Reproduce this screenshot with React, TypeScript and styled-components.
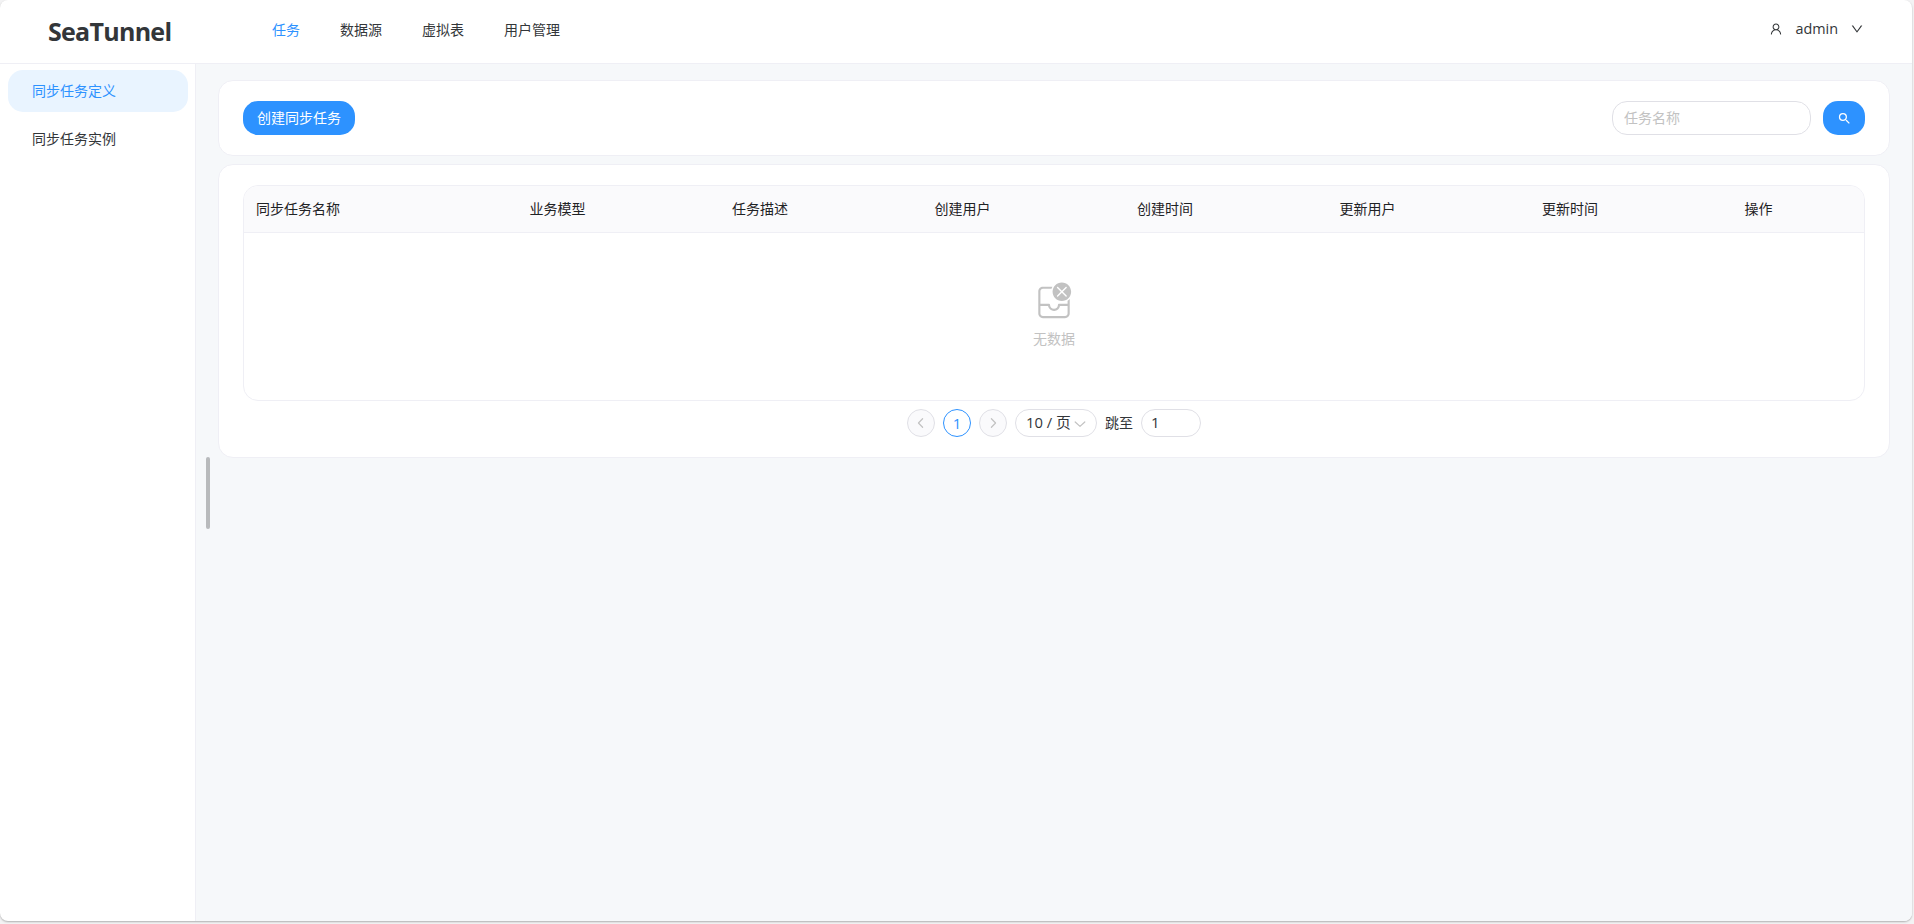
import React from 'react';
import styled, { createGlobalStyle } from 'styled-components';
import { AiOutlineUser, AiOutlineDown } from 'react-icons/ai';
import { MdSearch } from 'react-icons/md';

const GlobalStyle = createGlobalStyle`
  *, *::before, *::after { box-sizing: border-box; }
  body {
    margin: 0;
    background: #f3f3f4;
    color: #333639;
    font: 14px/22px 'Open Sans', 'Noto Sans CJK SC', sans-serif;
  }
  button, input { font: inherit; }
`;

const Page = styled.div`
  height: 924px;
  overflow: hidden;
`;

const Shell = styled.div`
  display: flex;
  flex-direction: column;
  width: 1912px;
  height: 921px;
  overflow: hidden;
  border-radius: 8px;
  background: #fff;
  box-shadow: 0 1px 2px rgba(0, 0, 0, 0.28);
`;

const Header = styled.header`
  display: flex;
  align-items: center;
  height: 64px;
  padding: 0 48px;
  border-bottom: 1px solid #efeff5;
`;

const Logo = styled.h1`
  width: 224px;
  margin: 0;
  padding-bottom: 2px;
  font-size: 25px;
  line-height: 60px;
  font-weight: 700;
  letter-spacing: -0.72px;
  white-space: nowrap;
`;

const Nav = styled.nav`
  display: flex;
  gap: 40px;
  padding-bottom: 4px;
`;

const NavItem = styled.a<{ $active?: boolean }>`
  color: ${({ $active }) => ($active ? '#2d92ff' : '#333639')};
`;

const User = styled.div`
  display: flex;
  align-items: center;
  margin-left: auto;
  padding-bottom: 6px;
`;

const UserName = styled.span`
  margin: 0 12px;
  font-size: 14.4px;
`;

const Body = styled.div`
  display: flex;
  flex: 1;
  min-height: 0;
`;

const Sider = styled.aside`
  display: flex;
  flex-direction: column;
  gap: 6px;
  width: 196px;
  padding: 6px 7px 0 8px;
  border-right: 1px solid #efeff5;
`;

const MenuItem = styled.a<{ $active?: boolean }>`
  display: flex;
  align-items: center;
  height: 42px;
  padding-left: 24px;
  border-radius: 15px;
  color: ${({ $active }) => ($active ? '#2d92ff' : '#333639')};
  background: ${({ $active }) => ($active ? '#e9f4ff' : 'transparent')};
`;

const Content = styled.main`
  display: flex;
  flex: 1;
  background: #f6f8fa;
`;

const ScrollThumb = styled.div`
  width: 4px;
  height: 72px;
  margin: 393px 8px 0 10px;
  border-radius: 2px;
  background: #b8babc;
`;

const Stack = styled.div`
  display: flex;
  flex-direction: column;
  gap: 8px;
  width: 1672px;
  padding-top: 16px;
`;

const Card = styled.section`
  padding: 20px 24px;
  border: 1px solid #efeff5;
  border-radius: 15px;
  background: #fff;
`;

const Toolbar = styled(Card)`
  display: flex;
  justify-content: space-between;
`;

const Search = styled.div`
  display: flex;
  gap: 12px;
`;

const Button = styled.button<{ $width: number }>`
  display: flex;
  align-items: center;
  justify-content: center;
  width: ${({ $width }) => $width}px;
  height: 34px;
  padding: 0;
  border: 0;
  border-radius: 15px;
  color: #fff;
  background: #2d92ff;
`;

const TextInput = styled.input<{ $width: number; $height: number }>`
  width: ${({ $width }) => $width}px;
  height: ${({ $height }) => $height}px;
  padding: 0 11px 2px;
  border: 1px solid #e0e0e6;
  border-radius: 15px;
  outline: none;
  color: #333639;
  background: #fff;
  &::placeholder { color: #c2c2c2; }
`;

const JumpInput = styled(TextInput)`
  padding-left: 9px;
  font-size: 15px;
`;

const TableFrame = styled.div`
  height: 216px;
  overflow: hidden;
  border: 1px solid #efeff5;
  border-radius: 15px;
`;

const HeadRow = styled.div`
  display: grid;
  grid-template-columns: 273.5px repeat(6, 202.5px) 1fr;
  height: 47px;
  border-bottom: 1px solid #efeff5;
  background: #fafafc;
`;

const HeadCell = styled.div`
  padding: 12px;
  color: #1f2225;
`;

const Empty = styled.div`
  display: flex;
  flex-direction: column;
  align-items: center;
  gap: 7px;
  padding-top: 48px;
  color: #c2c2c2;
`;

const Pagination = styled.div`
  display: flex;
  align-items: center;
  justify-content: center;
  gap: 8px;
  margin-top: 8px;
`;

const PageButton = styled.button<{ $active?: boolean }>`
  display: flex;
  align-items: center;
  justify-content: center;
  width: 28px;
  height: 28px;
  padding: 0;
  border: 1px solid ${({ $active }) => ($active ? '#2d92ff' : '#e0e0e6')};
  border-radius: 50%;
  font-size: 15px;
  color: ${({ $active }) => ($active ? '#2d92ff' : '#c2c2c2')};
  background: ${({ $active }) => ($active ? '#fff' : '#fafafc')};
`;

const SizeSelect = styled.div`
  display: flex;
  align-items: center;
  gap: 1px;
  width: 82px;
  height: 28px;
  padding: 0 0 2px 10px;
  border: 1px solid #e0e0e6;
  border-radius: 15px;
  font-size: 14.8px;
  white-space: nowrap;
  svg { color: #c2c2c2; margin-top: 3px; }
`;

const Chevron = ({ d, size = 16 }: { d: string; size?: number }) => (
  <svg width={size} height={size} viewBox="0 0 20 20" fill="none" stroke="currentColor" strokeWidth={1.5} strokeLinecap="round" strokeLinejoin="round">
    <path d={d} />
  </svg>
);

const EmptyIcon = () => (
  <svg width="40" height="40" viewBox="0 0 28 28" fill="currentColor">
    <path d="M26 7.5C26 11.0899 23.0899 14 19.5 14C15.9101 14 13 11.0899 13 7.5C13 3.91015 15.9101 1 19.5 1C23.0899 1 26 3.91015 26 7.5ZM16.8536 4.14645C16.6583 3.95118 16.3417 3.95118 16.1464 4.14645C15.9512 4.34171 15.9512 4.65829 16.1464 4.85355L18.7929 7.5L16.1464 10.1464C15.9512 10.3417 15.9512 10.6583 16.1464 10.8536C16.3417 11.0488 16.6583 11.0488 16.8536 10.8536L19.5 8.20711L22.1464 10.8536C22.3417 11.0488 22.6583 11.0488 22.8536 10.8536C23.0488 10.6583 23.0488 10.3417 22.8536 10.1464L20.2071 7.5L22.8536 4.85355C23.0488 4.65829 23.0488 4.34171 22.8536 4.14645C22.6583 3.95118 22.3417 3.95118 22.1464 4.14645L19.5 6.79289L16.8536 4.14645Z" />
    <path d="M25 22.75V12.5991C24.5572 13.0765 24.053 13.4961 23.5 13.8454V16H17.5L17.3982 16.0068C17.0322 16.0565 16.75 16.3703 16.75 16.75C16.75 18.2688 15.5188 19.5 14 19.5C12.4812 19.5 11.25 18.2688 11.25 16.75L11.2432 16.6482C11.1935 16.2822 10.8797 16 10.5 16H4.5V7.25C4.5 6.2835 5.2835 5.5 6.25 5.5H12.2696C12.4146 4.97463 12.6153 4.47237 12.865 4H6.25C4.45507 4 3 5.45507 3 7.25V22.75C3 24.5449 4.45507 26 6.25 26H21.75C23.5449 26 25 24.5449 25 22.75ZM4.5 22.75V17.5H9.81597L9.85751 17.7041C10.2905 19.5919 11.9808 21 14 21L14.215 20.9947C16.2095 20.8953 17.842 19.4209 18.184 17.5H23.5V22.75C23.5 23.7165 22.7165 24.5 21.75 24.5H6.25C5.2835 24.5 4.5 23.7165 4.5 22.75Z" />
  </svg>
);

const navItems = ['任务', '数据源', '虚拟表', '用户管理'];
const menuItems = ['同步任务定义', '同步任务实例'];
const columns = ['同步任务名称', '业务模型', '任务描述', '创建用户', '创建时间', '更新用户', '更新时间', '操作'];

export default function App() {
  return (
    <Page>
      <GlobalStyle />
      <Shell>
        <Header>
          <Logo>SeaTunnel</Logo>
          <Nav>
            {navItems.map((label, i) => (
              <NavItem key={label} $active={i === 0}>{label}</NavItem>
            ))}
          </Nav>
          <User>
            <AiOutlineUser size={14} />
            <UserName>admin</UserName>
            <AiOutlineDown size={14} />
          </User>
        </Header>
        <Body>
          <Sider>
            {menuItems.map((label, i) => (
              <MenuItem key={label} $active={i === 0}>{label}</MenuItem>
            ))}
          </Sider>
          <Content>
            <ScrollThumb />
            <Stack>
              <Toolbar>
                <Button $width={112}>创建同步任务</Button>
                <Search>
                  <TextInput $width={199} $height={34} placeholder="任务名称" />
                  <Button $width={42} aria-label="搜索"><MdSearch size={15} /></Button>
                </Search>
              </Toolbar>
              <Card>
                <TableFrame>
                  <HeadRow>
                    {columns.map((label) => <HeadCell key={label}>{label}</HeadCell>)}
                  </HeadRow>
                  <Empty>
                    <EmptyIcon />
                    <span>无数据</span>
                  </Empty>
                </TableFrame>
                <Pagination>
                  <PageButton><Chevron d="M12 4.7 6.8 10l5.2 5.3" /></PageButton>
                  <PageButton $active>1</PageButton>
                  <PageButton><Chevron d="M8 4.7 13.2 10 8 15.3" /></PageButton>
                  <SizeSelect>
                    <span>10 / 页</span>
                    <Chevron d="M4 7.5 10 13 16 7.5" />
                  </SizeSelect>
                  <span>跳至</span>
                  <JumpInput $width={60} $height={28} defaultValue="1" />
                </Pagination>
              </Card>
            </Stack>
          </Content>
        </Body>
      </Shell>
    </Page>
  );
}
